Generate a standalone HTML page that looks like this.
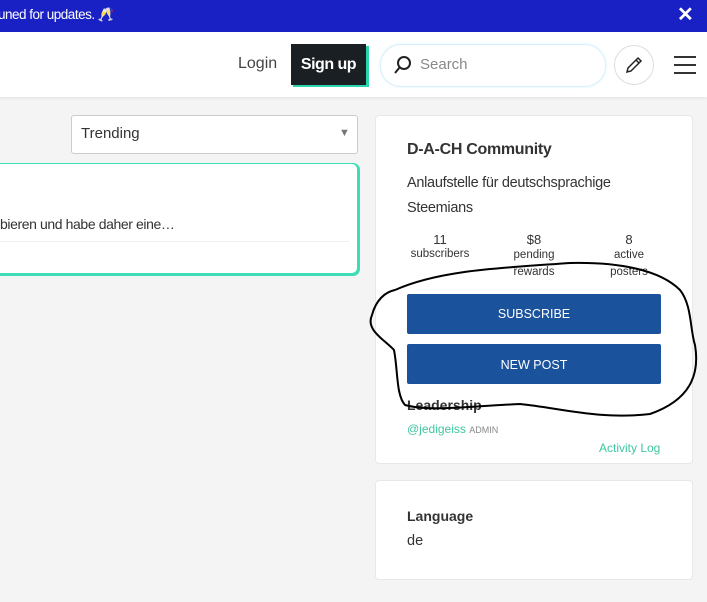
<html><head><style>
body{margin:0;width:707px;height:602px;overflow:hidden;background:#f4f4f4;font-family:"Liberation Sans",sans-serif;position:relative;color:#333}
.a{position:absolute}
</style></head><body>
<div class="a" style="left:0;top:0;width:707px;height:32px;background:#1a21c4;color:#fff;font-size:13.5px;line-height:30px">
 <span class="a" style="left:-2px;top:0;letter-spacing:-0.5px">uned for updates. 🥂</span>
 <span class="a" style="left:677px;top:0;font-size:20px;font-weight:bold">✕</span>
</div>
<div class="a" style="left:0;top:32px;width:707px;height:65px;background:#fff;box-shadow:0 1px 3px rgba(0,0,0,.08)"></div>
<div class="a" style="left:238px;top:55px;font-size:16px;color:#444">Login</div>
<div class="a" style="left:293px;top:46px;width:76px;height:41px;background:#2ad4ad"></div>
<div class="a" style="left:291px;top:44px;width:75px;height:41px;background:#1a1f24;color:#fff;font-weight:bold;font-size:16px;line-height:41px;text-align:center;letter-spacing:-0.5px">Sign up</div>
<div class="a" style="left:380px;top:44px;width:224px;height:41px;border:1px solid #d8f0fb;border-radius:21px;background:#fff;box-shadow:0 0 3px #e0f4fc"></div>
<svg class="a" style="left:393px;top:55px" width="20" height="20" viewBox="0 0 20 20"><circle cx="11" cy="8" r="6" fill="none" stroke="#222" stroke-width="2"/><line x1="7" y1="12" x2="2" y2="18" stroke="#222" stroke-width="2"/></svg>
<div class="a" style="left:420px;top:56px;font-size:15px;color:#888">Search</div>
<div class="a" style="left:614px;top:45px;width:38px;height:38px;border:1px solid #ddd;border-radius:50%"></div>
<svg class="a" style="left:624px;top:55px" width="20" height="20" viewBox="0 0 20 20"><path d="M3 17 L4 13 L14 3 L17 6 L7 16 Z M12 5 L15 8" fill="none" stroke="#222" stroke-width="1.5"/></svg>
<svg class="a" style="left:674px;top:55px" width="22" height="20"><rect y="1" width="22" height="2" fill="#333"/><rect y="9" width="22" height="2" fill="#333"/><rect y="17" width="22" height="2" fill="#333"/></svg>

<div class="a" style="left:71px;top:115px;width:285px;height:37px;border:1px solid #ccc;border-radius:3px;background:#fff"></div>
<div class="a" style="left:81px;top:125px;font-size:15px;color:#333">Trending</div>
<div class="a" style="left:339px;top:127px;font-size:11px;color:#777">▼</div>

<div class="a" style="left:-10px;top:164px;width:367px;height:109px;background:#fff;border-radius:5px;box-shadow:1px 1px 0 2px #3fdcb8"></div>
<div class="a" style="left:0;top:216px;font-size:14px;color:#333;letter-spacing:-0.4px">bieren und habe daher eine…</div>
<div class="a" style="left:0;top:241px;width:349px;height:1px;background:#eee"></div>

<div class="a" style="left:375px;top:115px;width:316px;height:347px;background:#fff;border:1px solid #e8e8e8;border-radius:4px"></div>
<div class="a" style="left:407px;top:141px;font-size:16px;font-weight:bold;color:#333;letter-spacing:-0.3px">D-A-CH Community</div>
<div class="a" style="left:407px;top:171px;font-size:14.5px;line-height:25px;color:#333;width:240px;letter-spacing:-0.3px">Anlaufstelle für deutschsprachige Steemians</div>
<div class="a" style="left:400px;top:233px;width:80px;text-align:center;font-size:13px;line-height:14px">11<br><span style="font-size:11.5px">subscribers</span></div>
<div class="a" style="left:494px;top:233px;width:80px;text-align:center;font-size:13px;line-height:14px">$8<br><span style="font-size:11.5px;line-height:17px">pending<br>rewards</span></div>
<div class="a" style="left:589px;top:233px;width:80px;text-align:center;font-size:13px;line-height:14px">8<br><span style="font-size:11.5px;line-height:17px">active<br>posters</span></div>
<div class="a" style="left:407px;top:294px;width:254px;height:40px;background:#1a539c;border-radius:2px;color:#fff;font-size:12.5px;line-height:40px;text-align:center">SUBSCRIBE</div>
<div class="a" style="left:407px;top:344px;width:254px;height:40px;background:#1a539c;border-radius:2px;color:#fff;font-size:12.5px;line-height:42px;text-align:center">NEW POST</div>
<div class="a" style="left:407px;top:397px;font-size:14px;font-weight:bold;color:#333">Leadership</div>
<div class="a" style="left:407px;top:422px;font-size:12px;color:#3fc7a0">@jedigeiss <span style="font-size:9px;color:#888">ADMIN</span></div>
<div class="a" style="left:599px;top:441px;font-size:12px;color:#3fc7a0">Activity Log</div>

<div class="a" style="left:375px;top:480px;width:316px;height:98px;background:#fff;border:1px solid #e8e8e8;border-radius:4px"></div>
<div class="a" style="left:407px;top:508px;font-size:14px;font-weight:bold;color:#333">Language</div>
<div class="a" style="left:407px;top:533px;font-size:14.5px;color:#333">de</div>

<svg class="a" style="left:0;top:0" width="707" height="602"><path d="M395 290 C440 270 500 268 570 263 C620 262 660 270 680 290 C692 305 690 330 695 345 C700 375 690 400 650 414 C600 420 560 408 520 404 C470 406 430 412 405 405 C396 395 398 370 394 350 C385 340 365 330 372 315 C376 300 385 292 395 290" fill="none" stroke="#000" stroke-width="2"/></svg>
</body></html>
